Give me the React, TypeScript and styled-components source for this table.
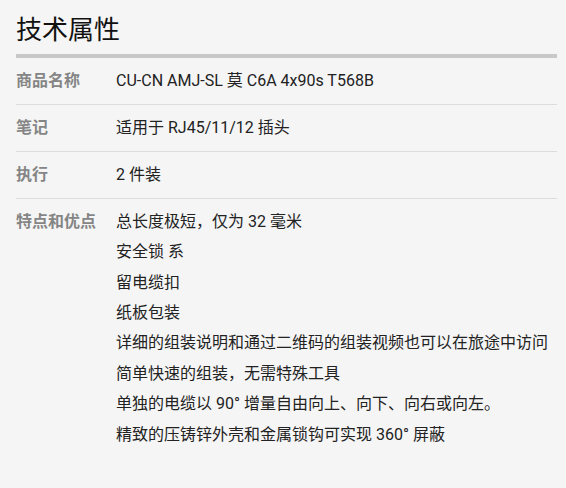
import React from "react";
import styled, { createGlobalStyle } from "styled-components";

const GlobalStyle = createGlobalStyle`
  html, body {
    margin: 0;
    padding: 0;
    background: #f5f5f5;
  }
  body {
    font-family: Roboto, "Noto Sans CJK SC", sans-serif;
    font-size: 16px;
    color: #222;
  }
`;

const Page = styled.div`
  padding: 0 9px 0 16px;
  min-height: 488px;
  box-sizing: border-box;
  background: #f5f5f5;
`;

const Title = styled.h2`
  margin: 0;
  padding: 14px 0 8px;
  font-size: 26px;
  line-height: 32px;
  font-weight: 400;
  color: #111;
  border-bottom: 4px solid #c8c8c8;
`;

const Table = styled.dl`
  margin: 0;
`;

const Row = styled.div<{ $last?: boolean }>`
  display: grid;
  grid-template-columns: 100px 1fr;
  padding: 7.8px 0;
  border-bottom: ${(p) => (p.$last ? "none" : "1px solid #dcdcdc")};
`;

const Label = styled.dt`
  font-weight: 700;
  color: #858585;
  line-height: 30.4px;
`;

const Value = styled.dd`
  margin: 0;
  color: #222;
  line-height: 30.4px;
`;

const List = styled.ul`
  margin: 0;
  padding: 0;
  list-style: none;
`;

const Item = styled.li`
  line-height: 30.4px;
  white-space: nowrap;
`;

const features = [
  "总长度极短，仅为 32 毫米",
  "安全锁 系",
  "留电缆扣",
  "纸板包装",
  "详细的组装说明和通过二维码的组装视频也可以在旅途中访问",
  "简单快速的组装，无需特殊工具",
  "单独的电缆以 90° 增量自由向上、向下、向右或向左。",
  "精致的压铸锌外壳和金属锁钩可实现 360° 屏蔽",
];

export default function App() {
  return (
    <>
      <GlobalStyle />
      <Page>
        <Title>技术属性</Title>
        <Table>
          <Row>
            <Label>商品名称</Label>
            <Value>CU-CN AMJ-SL 莫 C6A 4x90s T568B</Value>
          </Row>
          <Row>
            <Label>笔记</Label>
            <Value>适用于 RJ45/11/12 插头</Value>
          </Row>
          <Row>
            <Label>执行</Label>
            <Value>2 件装</Value>
          </Row>
          <Row $last>
            <Label>特点和优点</Label>
            <Value>
              <List>
                {features.map((f) => (
                  <Item key={f}>{f}</Item>
                ))}
              </List>
            </Value>
          </Row>
        </Table>
      </Page>
    </>
  );
}
